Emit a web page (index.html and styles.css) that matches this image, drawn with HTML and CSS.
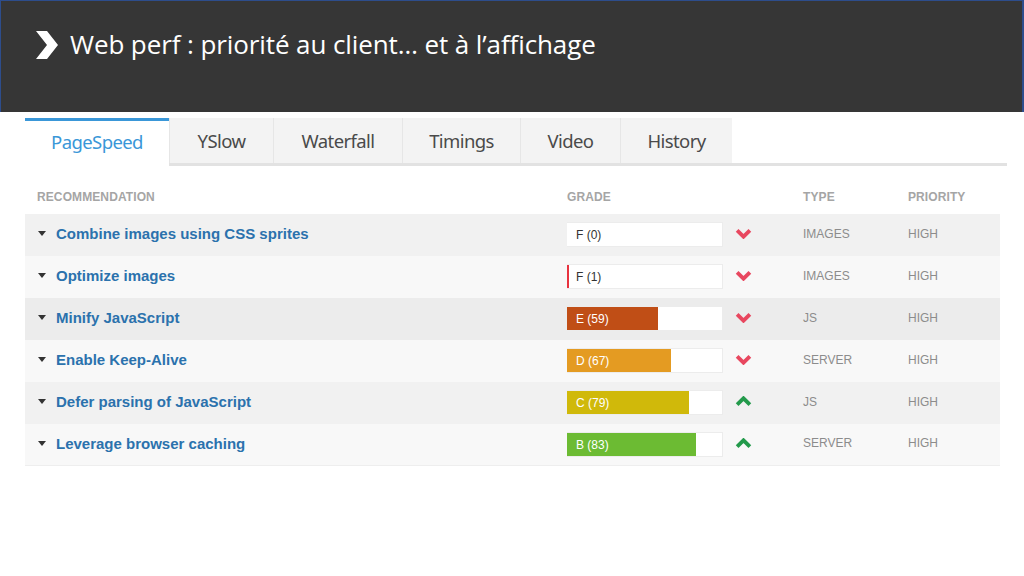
FILE: index.html
```html
<!DOCTYPE html>
<html lang="fr">
<head>
<meta charset="utf-8">
<link rel="stylesheet" href="styles.css">
</head>
<body>
<header class="slide-head">
  <svg class="chev" width="22" height="28" viewBox="0 0 22 28"><polygon points="0,0 11,0 22,14 11,28 0,28 11,14" fill="#fff"/></svg>
  <h1 class="title">Web perf : priorité au client… et à l’affichage</h1>
</header>
<main class="panel">
  <nav class="tabs">
    <div class="tab active">PageSpeed</div>
    <div class="tab">YSlow</div>
    <div class="tab">Waterfall</div>
    <div class="tab">Timings</div>
    <div class="tab">Video</div>
    <div class="tab">History</div>
  </nav>
  <div class="table">
    <div class="row head">
      <div class="c-rec">RECOMMENDATION</div>
      <div class="c-grade">GRADE</div>
      <div class="c-type">TYPE</div>
      <div class="c-prio">PRIORITY</div>
    </div>
    <div class="row r1">
      <div class="c-rec"><span class="tri"></span><span class="name">Combine images using CSS sprites</span></div>
      <div class="c-grade"><div class="gbox"><div class="fill f" style="width:0%"></div><span class="glabel dark">F (0)</span></div><svg class="arr down" viewBox="0 0 16 10"><polyline points="2,2 8,8 14,2"/></svg></div>
      <div class="c-type">IMAGES</div>
      <div class="c-prio">HIGH</div>
    </div>
    <div class="row r2">
      <div class="c-rec"><span class="tri"></span><span class="name">Optimize images</span></div>
      <div class="c-grade"><div class="gbox"><div class="fill f" style="width:2px"></div><span class="glabel dark">F (1)</span></div><svg class="arr down" viewBox="0 0 16 10"><polyline points="2,2 8,8 14,2"/></svg></div>
      <div class="c-type">IMAGES</div>
      <div class="c-prio">HIGH</div>
    </div>
    <div class="row r3">
      <div class="c-rec"><span class="tri"></span><span class="name">Minify JavaScript</span></div>
      <div class="c-grade"><div class="gbox"><div class="fill e" style="width:59%"></div><span class="glabel">E (59)</span></div><svg class="arr down" viewBox="0 0 16 10"><polyline points="2,2 8,8 14,2"/></svg></div>
      <div class="c-type">JS</div>
      <div class="c-prio">HIGH</div>
    </div>
    <div class="row r4">
      <div class="c-rec"><span class="tri"></span><span class="name">Enable Keep-Alive</span></div>
      <div class="c-grade"><div class="gbox"><div class="fill d" style="width:67%"></div><span class="glabel">D (67)</span></div><svg class="arr down" viewBox="0 0 16 10"><polyline points="2,2 8,8 14,2"/></svg></div>
      <div class="c-type">SERVER</div>
      <div class="c-prio">HIGH</div>
    </div>
    <div class="row r5">
      <div class="c-rec"><span class="tri"></span><span class="name">Defer parsing of JavaScript</span></div>
      <div class="c-grade"><div class="gbox"><div class="fill c" style="width:79%"></div><span class="glabel">C (79)</span></div><svg class="arr up" viewBox="0 0 16 10"><polyline points="2,8 8,2 14,8"/></svg></div>
      <div class="c-type">JS</div>
      <div class="c-prio">HIGH</div>
    </div>
    <div class="row r6">
      <div class="c-rec"><span class="tri"></span><span class="name">Leverage browser caching</span></div>
      <div class="c-grade"><div class="gbox"><div class="fill b" style="width:83%"></div><span class="glabel">B (83)</span></div><svg class="arr up" viewBox="0 0 16 10"><polyline points="2,8 8,2 14,8"/></svg></div>
      <div class="c-type">SERVER</div>
      <div class="c-prio">HIGH</div>
    </div>
  </div>
</main>
</body>
</html>
```
FILE: styles.css
```css
* { box-sizing: border-box; }
html, body { margin: 0; padding: 0; background: #fff; }
body { width: 1024px; height: 576px; overflow: hidden; font-family: "Liberation Sans", Arial, sans-serif; }

.slide-head {
  height: 112px;
  background: #363636;
  border-top: 1px solid #2d4d8c;
  border-left: 1px solid #2d4d8c;
  border-right: 2px solid #2d4d8c;
  display: flex;
  align-items: flex-start;
  padding: 30px 0 0 35px;
}
.chev { display: block; flex: none; }
.title {
  margin: -3px 0 0 12px;
  font-family: "Open Sans", "Noto Sans", sans-serif;
  font-weight: 400;
  font-size: 26px;
  line-height: 32px;
  color: #fff;
  letter-spacing: -0.1px;
}

.panel { padding: 6px 0 0 25px; }

.tabs {
  display: flex;
  width: 982px;
  height: 48px;
  border-bottom: 3px solid #e2e2e2;
}
.tab {
  height: 45px;
  background: #f3f3f3;
  border-left: 1px solid #e6e6e6;
  font-family: "Noto Sans", "Open Sans", sans-serif;
  font-size: 18.5px;
  line-height: 45px;
  color: #4a4a4a;
  text-align: center;
  letter-spacing: -0.6px;
}
.tab:nth-child(1) { width: 144px; }
.tab:nth-child(2) { width: 104px; }
.tab:nth-child(3) { width: 129px; }
.tab:nth-child(4) { width: 118px; }
.tab:nth-child(5) { width: 100px; }
.tab:nth-child(6) { width: 112px; }
.tab.active {
  background: #fff;
  border-left: 0;
  border-top: 3px solid #3a97d8;
  color: #3a97d8;
  height: 48px;
  line-height: 42px;
  margin-bottom: -3px;
}

.table { width: 975px; }
.row {
  display: grid;
  grid-template-columns: 542px 236px 105px 92px;
  align-items: center;
  height: 42px;
  padding-bottom: 3px;
}
.row.head { height: 48px; padding-top: 14px; padding-bottom: 0; }
.head > div {
  font-size: 12px;
  font-weight: 700;
  color: #a5a5a5;
  letter-spacing: 0.1px;
}
.head .c-rec { padding-left: 12px; }

.r1 { background: #f1f1f1; }
.r2 { background: #f8f8f8; }
.r3 { background: #ececec; }
.r4 { background: #f8f8f8; }
.r5 { background: #f1f1f1; }
.r6 { background: #f8f8f8; border-bottom: 1px solid #eee; }

.c-rec { display: flex; align-items: center; padding-left: 13px; }
.tri {
  width: 0; height: 0;
  border-left: 4px solid transparent;
  border-right: 4px solid transparent;
  border-top: 5px solid #333;
  margin-right: 10px;
}
.name {
  font-size: 15px;
  font-weight: 700;
  color: #2b72ad;
}

.c-grade { display: flex; align-items: center; }
.gbox {
  position: relative;
  width: 156px;
  height: 25px;
  margin-top: 2px;
  background: #fff;
  border: 1px solid #ececec;
  border-left: 0;
}
.fill { height: 100%; }
.fill.f { background: #e8333f; }
.fill.e { background: #c04e16; }
.fill.d { background: #e49b22; }
.fill.c { background: #d0b90a; }
.fill.b { background: #6cbb33; }
.glabel {
  position: absolute;
  left: 9px;
  top: 0;
  line-height: 24px;
  font-size: 12px;
  color: #fff;
}
.glabel.dark { color: #333; }
.arr {
  width: 17px;
  height: 11px;
  margin-left: 12px;
  fill: none;
  stroke-width: 3.6;
  stroke-linecap: butt;
  stroke-linejoin: miter;
}
.arr.down { stroke: #e8475f; }
.arr.up { stroke: #239a4b; }

.c-type, .c-prio {
  font-size: 12px;
  color: #8c8c8c;
}
```
